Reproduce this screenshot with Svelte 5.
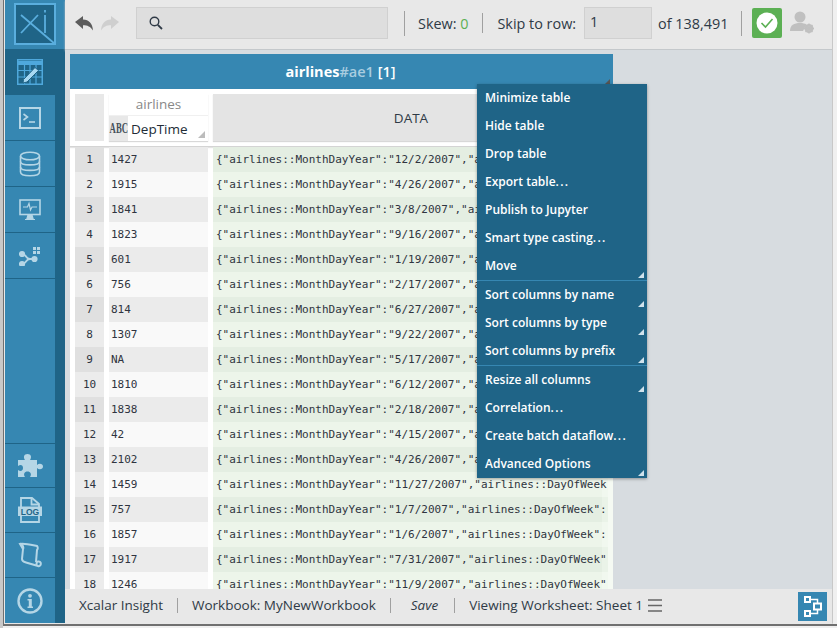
<script lang="ts">
  const rows: [string, string][] = [
    ["1427", "12/2/2007"], ["1915", "4/26/2007"], ["1841", "3/8/2007"], ["1823", "9/16/2007"],
    ["601", "1/19/2007"], ["756", "2/17/2007"], ["814", "6/27/2007"], ["1307", "9/22/2007"],
    ["NA", "5/17/2007"], ["1810", "6/12/2007"], ["1838", "2/18/2007"], ["42", "4/15/2007"],
    ["2102", "4/26/2007"], ["1459", "11/27/2007"], ["757", "1/7/2007"], ["1857", "1/6/2007"],
    ["1917", "7/31/2007"], ["1246", "11/9/2007"],
  ];

  const menu = [
    [
      { label: "Minimize table" },
      { label: "Hide table" },
      { label: "Drop table" },
      { label: "Export table", dots: true },
      { label: "Publish to Jupyter" },
      { label: "Smart type casting", dots: true },
      { label: "Move", sub: true },
    ],
    [
      { label: "Sort columns by name", sub: true },
      { label: "Sort columns by type", sub: true },
      { label: "Sort columns by prefix", sub: true },
    ],
    [
      { label: "Resize all columns", sub: true },
      { label: "Correlation", dots: true },
      { label: "Create batch dataflow", dots: true },
      { label: "Advanced Options", sub: true },
    ],
  ];
</script>

<div class="frame">
  <div class="frame-line">
    <div class="window">
      <aside class="sidebar">
        <div class="logo-wrap">
          <svg class="logo" viewBox="0 0 42 42" width="42" height="42">
            <rect x="1" y="1" width="40" height="40" fill="#1f6487" stroke="#5aaede" stroke-width="2" />
            <path d="M7 12 L41 41 M24 12 L7 30 M31 12 V30 M31 7 V9.500" fill="none" stroke="#5aaede" stroke-width="1.800" />
          </svg>
        </div>
        <div class="nav-top">
          <div class="nav-item active">
            <svg viewBox="0 0 26 26" width="26" height="26" fill="none" stroke="#4fa8dc">
              <rect x="0.750" y="0.750" width="24.500" height="24.500" stroke-width="1.500" />
              <path d="M1 4 H25" stroke-width="4" />
              <path d="M1 11.500 H25 M1 18 H25 M7.500 6 V25 M13 6 V25 M19 6 V25" stroke-width="1.200" />
              <path d="M6.500 20.500 L18 8.500 L21.500 11.500 L10 23 L6 24 Z" fill="#a8d8f2" stroke="#1f6487" stroke-width="1" />
            </svg>
          </div>
          <div class="nav-item">
            <svg viewBox="0 0 22 22" width="22" height="22" fill="none" stroke="#b5d6e6" stroke-width="2">
              <rect x="1" y="1" width="20" height="20" />
              <path d="M4.500 7 L8.500 10 L4.500 13" stroke-width="1.600" />
              <path d="M10 15 H16" stroke-width="1.600" />
            </svg>
          </div>
          <div class="nav-item">
            <svg viewBox="0 0 22 26" width="22" height="26" fill="none" stroke="#b5d6e6" stroke-width="1.600">
              <ellipse cx="11" cy="5" rx="9.500" ry="3.800" />
              <path d="M1.500 5 V21 C1.500 26 20.500 26 20.500 21 V5" />
              <path d="M1.500 10.500 C1.500 15 20.500 15 20.500 10.500 M1.500 16 C1.500 20.500 20.500 20.500 20.500 16" />
            </svg>
          </div>
          <div class="nav-item">
            <svg viewBox="0 0 22 22" width="22" height="22" fill="none" stroke="#b5d6e6" stroke-width="1.600">
              <rect x="1" y="1" width="20" height="14.500" />
              <path d="M4 8 H8.500 L10 4.500 L11.500 11 L13 8 H18" stroke-width="1.200" />
              <path d="M8 19.500 L9 16 H13 L14 19.500 Z M6 20.500 H16" fill="#b5d6e6" stroke-width="1.200" />
            </svg>
          </div>
          <div class="nav-item">
            <svg viewBox="0 0 22 20" width="22" height="20" fill="none" stroke="#b5d6e6" stroke-width="1.800">
              <path d="M3 8 C8 8 6 13 11 13 M3 18 C8 18 6 13 11 13 H15" />
              <circle cx="3" cy="8" r="2.200" fill="#b5d6e6" />
              <circle cx="3" cy="18" r="2.200" fill="#b5d6e6" />
              <circle cx="15.500" cy="13" r="2.200" fill="#b5d6e6" />
              <path d="M14 1 h3 v3 h-3 z M18 1 h3 v3 h-3 z M14 5 h3 v3 h-3 z M18 5 h3 v3 h-3 z" fill="#b5d6e6" stroke="none" />
            </svg>
          </div>
        </div>
        <div class="nav-bottom">
          <div class="nav-item bot puzzle">
            <svg viewBox="0 0 26 25" width="26" height="25" fill="#b5d6e6">
              <path d="M1 7 H8 C6 4 7 1 10.500 1 C14 1 15 4 13 7 H20 V12 C22 10 26 10.500 26 13.500 C26 16.500 22 17 20 15 V24 H13 C15 21 13.500 18.500 10.500 18.500 C7.500 18.500 6 21 8 24 H1 V17 C4 19 6 17.500 6 15 C6 12.500 4 11 1 13 Z" />
            </svg>
          </div>
          <div class="nav-item bot">
            <svg viewBox="0 0 24 26" width="24" height="26" fill="none" stroke="#b5d6e6" stroke-width="1.800">
              <path d="M3 10 V1 H14 L21 7 V25 H3 V18" />
              <path d="M13.500 1 V7.500 H21" />
              <rect x="0" y="9.500" width="24" height="9.500" fill="#b5d6e6" stroke="none" />
              <text x="12" y="17.500" text-anchor="middle" class="log">LOG</text>
            </svg>
          </div>
          <div class="nav-item bot">
            <svg viewBox="0 0 24 26" width="24" height="26" fill="none" stroke="#b5d6e6" stroke-width="2">
              <path d="M5 7 L2 2 C6 1 14 3 19 4 C20 5 20 7 19 8 L18 20" />
              <path d="M5 7 L4 17 C4 19 6 20 8 20.500 L20 24 C23 25 24 20 21 19.500 C19 19 18 21 19 23" />
              <path d="M2 2 C4 1 6 5 5 7" />
            </svg>
          </div>
          <div class="nav-item bot last">
            <svg viewBox="0 0 26 26" width="26" height="26" fill="none">
              <circle cx="13" cy="13" r="11.500" stroke="#b5d6e6" stroke-width="2.400" />
              <circle cx="13" cy="7.800" r="1.900" fill="#b5d6e6" />
              <path d="M10.500 11 H14.800 V18.500 H16 V20 H10.500 V18.500 H11.800 V12.500 H10.500 Z" fill="#b5d6e6" />
            </svg>
          </div>
        </div>
      </aside>

      <div class="main">
        <header class="topbar">
          <svg class="arrow" viewBox="0 0 18 15" width="18" height="15" fill="#5c5c5c">
            <path d="M0 6 L8 0 V3.500 C14 3.500 17.500 7.500 18 14.500 C15.500 10.500 12.500 9.200 8 9.200 V13 Z" />
          </svg>
          <svg class="arrow redo" viewBox="0 0 18 15" width="18" height="15" fill="#cfcfcf">
            <path d="M18 6 L10 0 V3.500 C4 3.500 0.500 7.500 0 14.500 C2.500 10.500 5.500 9.200 10 9.200 V13 Z" />
          </svg>
          <div class="search">
            <svg viewBox="0 0 14 14" width="14" height="14" fill="none" stroke="#2f3a46" stroke-width="1.400">
              <circle cx="5.500" cy="5.500" r="4.300" />
              <path d="M8.800 8.800 L13 13" stroke-width="1.800" />
            </svg>
          </div>
          <span class="sep tall"></span>
          <span class="bar-text skew">Skew: <b>0</b></span>
          <span class="sep short"></span>
          <span class="bar-text">Skip to row:</span>
          <div class="row-input">1</div>
          <span class="bar-text of">of 138,491</span>
          <span class="sep tall last"></span>
          <div class="ok">
            <svg viewBox="0 0 22 22" width="22" height="22">
              <circle cx="11" cy="11" r="10.500" fill="#fff" />
              <path d="M5.500 11 L9.500 15 L16.500 7" fill="none" stroke="#5cb054" stroke-width="1.600" />
            </svg>
          </div>
          <svg class="user" viewBox="0 0 26 24" width="26" height="24" fill="#c0c0c0">
            <circle cx="10" cy="6" r="5.500" />
            <path d="M0 20 C0 14 4 12 10 12 C13 12 15 12.500 16.500 13.500 L13 20 Z" />
            <circle cx="19" cy="17.500" r="3.300" fill="none" stroke="#c0c0c0" stroke-width="2.400" />
            <path d="M19 12.500 V22.500 M14 17.500 H24 M15.500 14 L22.500 21 M22.500 14 L15.500 21" stroke="#c0c0c0" stroke-width="1.400" />
          </svg>
        </header>

        <div class="content">
          <section class="table">
            <div class="table-title">
              <span class="name">airlines</span><span class="hash">#ae1</span>&nbsp;<span class="count">[1]</span>
              <span class="corner"></span>
            </div>
            <div class="table-scroll">
              <div class="thead">
                <div class="th-index"></div>
                <div class="th-col">
                  <div class="prefix">airlines</div>
                  <div class="col-name">
                    <span class="type"><span>ABC</span></span>
                    <span class="col-label">DepTime</span>
                    <span class="col-tri"></span>
                  </div>
                </div>
                <div class="th-data">DATA</div>
              </div>
              {#each rows as [dep, date], i}
                <div class="row" class:odd={i % 2 === 0}>
                  <div class="idx">{i + 1}</div>
                  <div class="val">{dep}</div>
                  <div class="data">
                    <div class="json">{`{"airlines::MonthDayYear":"${date}","airlines::DayOfWeek":"1"}`}</div>
                  </div>
                </div>
              {/each}
            </div>
          </section>

          <nav class="menu">
            {#each menu as group, g}
              <div class="group" class:first={g === 0}>
                {#each group as item}
                  <div class="menu-item">
                    {item.label}{#if item.dots}<span class="dots">...</span>{/if}
                    {#if item.sub}<span class="sub-tri"></span>{/if}
                  </div>
                {/each}
              </div>
            {/each}
          </nav>
        </div>

        <footer class="footer">
          <span>Xcalar Insight</span>
          <span class="sep foot"></span>
          <span>Workbook: MyNewWorkbook</span>
          <span class="sep foot"></span>
          <span class="save">Save</span>
          <span class="sep foot"></span>
          <span>Viewing Worksheet: Sheet 1</span>
          <svg class="burger" viewBox="0 0 14 13" width="14" height="13" fill="none" stroke="#666" stroke-width="1.500">
            <path d="M0 1 H14 M0 6.500 H14 M0 12 H14" />
          </svg>
          <div class="dag">
            <svg viewBox="0 0 18 21" width="18" height="21" fill="none" stroke="#fff" stroke-width="2">
              <rect x="1" y="1" width="5" height="5" />
              <rect x="1" y="15" width="5" height="5" />
              <rect x="10" y="7.500" width="7" height="6" />
              <path d="M6 3.500 H13.500 V7.500 M6 17.500 H13.500 V13.500" stroke-width="1.500" />
            </svg>
          </div>
        </footer>
      </div>
    </div>
  </div>
</div>

<style>
  :global(body) {
    margin: 0;
    background: #f0f0f0;
  }
  .frame {
    width: 837px;
    height: 628px;
    box-sizing: border-box;
    padding: 0 0 2px 3px;
    background: linear-gradient(to right, #c8c8c8 3px, #f0f0f0 3px);
    overflow: hidden;
  }
  .frame-line {
    height: 100%;
    box-sizing: border-box;
    border-left: 1px solid #707070;
    border-bottom: 2px solid #707070;
    padding-right: 4px;
  }
  .window {
    height: 100%;
    box-sizing: border-box;
    display: flex;
    overflow: hidden;
    border-left: 1px solid #e8e8e8;
    border-bottom: 1px solid #e8e8e8;
    border-right: 1px solid #c8c8c8;
    font-family: "Open Sans", sans-serif;
    color: #2f3a46;
  }

  /* left nav */
  .sidebar {
    width: 60px;
    flex: none;
    display: flex;
    flex-direction: column;
    background: linear-gradient(to right, #3687b2 50px, #1f6487 50px);
  }
  .logo-wrap {
    height: 49px;
    flex: none;
    box-sizing: border-box;
    padding: 3px 0 0 9px;
    background: #3687b2;
  }
  .logo {
    display: block;
  }
  .nav-top {
    flex: 1;
  }
  .nav-item {
    width: 50px;
    height: 46px;
    box-sizing: border-box;
    border-bottom: 1px solid #1f6487;
    display: flex;
    align-items: center;
    justify-content: center;
  }
  .nav-item.active {
    width: 60px;
    background: #1f6487;
    padding-right: 10px;
  }
  .nav-item.bot {
    height: 45px;
  }
  .nav-item.puzzle {
    height: 44px;
  }
  .nav-item.last {
    border-bottom: 0;
  }
  .nav-bottom {
    border-top: 1px solid #1f6487;
  }
  .log {
    font: 700 8.500px "Liberation Sans", sans-serif;
    fill: #1f6487;
    stroke: none;
  }

  .main {
    flex: 1;
    min-width: 0;
    display: flex;
    flex-direction: column;
  }

  /* toolbar */
  .topbar {
    height: 50px;
    flex: none;
    box-sizing: border-box;
    background: #e8e8e8;
    border-bottom: 1px solid #c4c8cb;
    box-shadow: 0 1px 2px #b8bcc0;
    display: flex;
    align-items: center;
    padding: 0 0 3px 10px;
    font-size: 14.400px;
    position: relative;
  }
  .arrow {
    flex: none;
  }
  .redo {
    margin-left: 8px;
  }
  .search {
    width: 252px;
    height: 32px;
    flex: none;
    box-sizing: border-box;
    margin-left: 17px;
    background: #dedede;
    border: 1px solid #d0d0d0;
    padding: 8px 0 0 12px;
  }
  .search svg {
    display: block;
  }
  .sep {
    width: 1px;
    background: #a0a0a0;
    flex: none;
  }
  .sep.tall {
    height: 25px;
    margin: 0 13px 0 16px;
  }
  .sep.short {
    height: 20px;
    margin: 0 14px;
  }
  .sep.last {
    margin: 0 10px 0 13px;
  }
  .bar-text {
    white-space: nowrap;
  }
  .skew b {
    font-weight: 400;
    color: #5cb054;
  }
  .row-input {
    width: 68px;
    height: 32px;
    flex: none;
    box-sizing: border-box;
    margin-left: 8px;
    background: #dedede;
    border: 1px solid #d0d0d0;
    padding: 4px 0 0 5px;
  }
  .of {
    margin-left: 6px;
  }
  .ok {
    width: 30px;
    height: 30px;
    flex: none;
    background: #5cb054;
    border-radius: 2px;
    display: flex;
    align-items: center;
    justify-content: center;
  }
  .user {
    flex: none;
    margin-left: 8px;
  }

  /* table */
  .content {
    flex: 1;
    min-height: 0;
    position: relative;
    background: #d7dce0;
    padding: 4px 0 0 5px;
    overflow: hidden;
  }
  .table {
    width: 543px;
    height: 535px;
    background: #fff;
    display: flex;
    flex-direction: column;
  }
  .table-title {
    height: 35px;
    flex: none;
    position: relative;
    background: #3687b2;
    color: #fff;
    font-size: 14.500px;
    font-weight: 700;
    line-height: 35px;
    text-align: center;
    padding-right: 2px;
    box-sizing: border-box;
  }
  .hash {
    color: #a9cde0;
    font-weight: 600;
  }
  .count {
    font-weight: 600;
  }
  .corner {
    position: absolute;
    right: 3px;
    bottom: 0;
    width: 0;
    height: 0;
    border-style: solid;
    border-width: 0 0 10px 10px;
    border-color: transparent transparent #555 transparent;
  }
  .table-scroll {
    flex: 1;
    min-height: 0;
    overflow: hidden;
  }
  .thead {
    height: 58px;
    box-sizing: border-box;
    padding: 5px 0 5px 5px;
    border-bottom: 1px solid #d4d4d4;
    display: flex;
    box-shadow: 0 1px 1px #e4e4e4;
  }
  .th-index {
    width: 29px;
    flex: none;
    background: #e8e8e8;
  }
  .th-col {
    width: 99px;
    flex: none;
    margin-left: 5px;
    box-shadow: 0 1px 1px #d8d8d8;
  }
  .prefix {
    height: 21px;
    line-height: 20px;
    font-size: 13.500px;
    color: #888;
    text-align: center;
  }
  .col-name {
    height: 26px;
    display: flex;
    align-items: center;
    position: relative;
    border-top: 1px solid #f0f0f0;
    box-sizing: border-box;
  }
  .type {
    width: 19px;
    height: 25px;
    background: #e8e8e8;
    flex: none;
    display: flex;
    align-items: center;
    justify-content: center;
    overflow: hidden;
  }
  .type span {
    font: 700 14px "Liberation Serif", serif;
    color: #46505a;
    transform: scaleX(0.620);
  }
  .col-label {
    font-size: 13.500px;
    margin-left: 3px;
    color: #222c36;
  }
  .col-tri {
    position: absolute;
    right: 3px;
    bottom: 3px;
    border-style: solid;
    border-width: 0 0 7px 7px;
    border-color: transparent transparent #bcbcbc transparent;
  }
  .th-data {
    width: 396px;
    flex: none;
    margin-left: 5px;
    background: #e4e4e4;
    box-shadow: 0 1px 1px #d8d8d8;
    font-size: 13.500px;
    line-height: 48px;
    text-align: center;
  }
  .row {
    height: 25px;
    display: flex;
    padding-left: 5px;
    font: 11px/26px "DejaVu Sans Mono", monospace;
    color: #2f3440;
  }
  .idx {
    width: 29px;
    flex: none;
    background: #ececec;
    text-align: center;
  }
  .val {
    width: 97px;
    flex: none;
    margin-left: 5px;
    padding-left: 2px;
    background: #f9f9f9;
  }
  .data {
    width: 400px;
    flex: none;
    margin-left: 5px;
    padding-left: 3px;
    box-sizing: border-box;
    background: linear-gradient(to right, #edf5ea 389px, #f1f8ef 389px 395px, #f5faf3 395px);
  }
  .json {
    width: 391px;
    overflow: hidden;
    white-space: nowrap;
  }
  .row.odd .idx {
    background: #e0e0e0;
  }
  .row.odd .val {
    background: #ebebeb;
  }
  .row.odd .data {
    background: linear-gradient(to right, #e4eee2 389px, #eaf3e8 389px 395px, #f5faf3 395px);
  }

  /* table menu */
  .menu {
    position: absolute;
    left: 412px;
    top: 34px;
    width: 170px;
    background: #1f6487;
    color: #fff;
    font-size: 12px;
    font-weight: 600;
    box-shadow: 0 1px 3px rgba(0, 0, 0, 0.35);
  }
  .group {
    border-top: 1px solid #3687b2;
  }
  .group.first {
    border-top: 0;
  }
  .menu-item {
    height: 28px;
    line-height: 28px;
    padding-left: 8px;
    position: relative;
  }
  .dots {
    letter-spacing: 1.300px;
  }
  .sub-tri {
    position: absolute;
    right: 3px;
    bottom: 2px;
    border-style: solid;
    border-width: 0 0 6px 6px;
    border-color: transparent transparent #d0e2ec transparent;
  }

  /* footer */
  .footer {
    height: 34px;
    flex: none;
    box-sizing: border-box;
    background: #e8e8e8;
    display: flex;
    align-items: center;
    padding: 0 5px 2px 14px;
    font-size: 13.500px;
    white-space: nowrap;
  }
  .sep.foot {
    height: 15px;
    margin: 0 14px;
  }
  .save {
    font-style: italic;
    padding: 0 2px 0 6px;
  }
  .burger {
    flex: none;
    margin-left: 5px;
  }
  .dag {
    width: 29px;
    height: 29px;
    flex: none;
    margin: 3px 0 0 auto;
    background: #3687b2;
    display: flex;
    align-items: center;
    justify-content: center;
  }
</style>
